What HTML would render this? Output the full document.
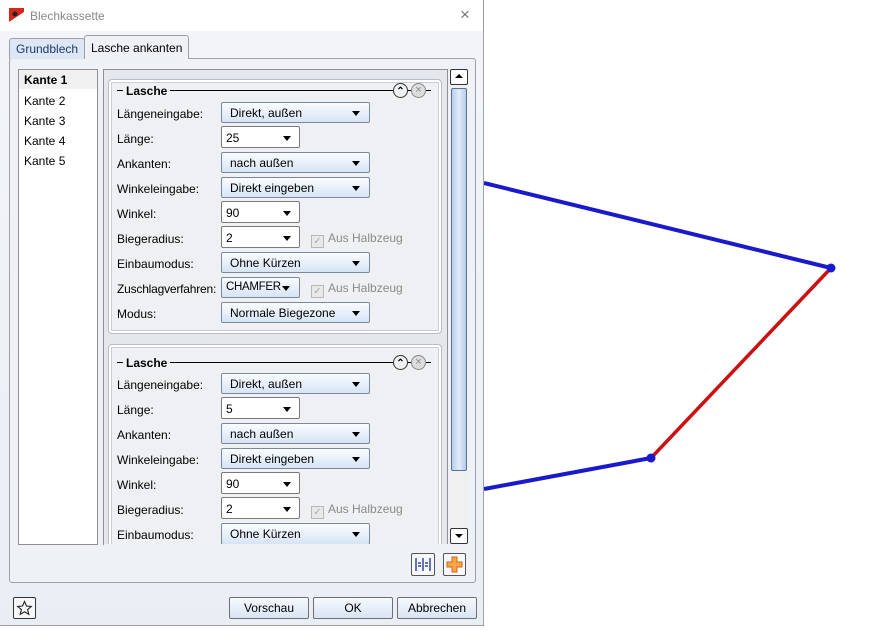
<!DOCTYPE html>
<html><head><meta charset="utf-8"><style>
*{box-sizing:border-box;margin:0;padding:0}
body{width:888px;height:630px;background:#fff;position:relative;overflow:hidden;font-family:"Liberation Sans",sans-serif;font-size:12px;color:#000}
.a{position:absolute}
#dlg{left:0;top:0;width:484px;height:626px;background:linear-gradient(#f3f5f8,#e9eef5);border-right:1px solid #a0a0a0;border-bottom:1px solid #a0a0a0}
#title{left:0;top:0;width:483px;height:31px;background:#fff}
.tab{border:1px solid #a0a0a0;border-bottom:none;border-radius:3px 3px 0 0;padding:3px 6px;font-size:12px}
.lbl{left:117px;font-size:12px}
.cb{height:21px;border:1px solid #7a8a9c;border-radius:2px;background:linear-gradient(#fafcff,#d6e4f5);padding:3px 0 0 8px;font-size:12px}
.cb:after{content:"";position:absolute;right:9px;top:8px;border:4px solid transparent;border-top:5px solid #000;border-bottom:0}
.ed{height:22px;border:1px solid #7a7a7a;border-radius:2px;background:#fff;padding:4px 0 0 4px}
.ed:after{content:"";position:absolute;right:8px;top:9px;border:4px solid transparent;border-top:5px solid #000;border-bottom:0}
.chk{font-size:12px;color:#8a8a8a;white-space:nowrap}
.chk i{display:inline-block;width:13px;height:13px;border:1px solid #b8b8b8;background:#e8e8e8;vertical-align:-2px;margin-right:4px;font-style:normal;font-size:10px;line-height:11px;text-align:center;color:#aaa}
.grp{border:1px solid #b8bcc4;border-radius:4px;background:#eef0f3;box-shadow:inset 0 0 0 2px #fff,inset 0 0 0 3px #ccd}
.btn{height:22px;border:1px solid #707070;border-radius:2px;background:linear-gradient(#f6f9fd,#d9e5f3);text-align:center;padding-top:3px}
.hd{font-weight:bold;background:#eef0f3;padding:0 3px;font-size:12px}
</style></head><body>
<svg class="a" style="left:0;top:0" width="888" height="630">
<line x1="484" y1="183" x2="831" y2="268" stroke="#1a1acc" stroke-width="4"/>
<line x1="831" y1="268" x2="651" y2="458" stroke="#cc1111" stroke-width="3.5"/>
<line x1="651" y1="458" x2="484" y2="489" stroke="#1a1acc" stroke-width="4"/>
<circle cx="831" cy="268" r="4.5" fill="#1a1acc"/><circle cx="651" cy="458" r="4.5" fill="#1a1acc"/>
</svg>
<div id="dlg" class="a"></div>
<div id="title" class="a"></div>
<svg class="a" style="left:9px;top:8px" width="15" height="14"><rect width="15" height="14" fill="#d7261e"/><polygon points="0,14 15,4 15,14" fill="#fff"/><circle cx="6" cy="6" r="2.5" fill="#222"/></svg>
<div class="a" style="left:30px;top:9px;font-size:12px;color:#888">Blechkassette</div>
<div class="a" style="left:460px;top:5px;font-size:17px;color:#777">×</div>
<div class="a" style="left:9px;top:58px;width:467px;height:525px;border:1px solid #a0a0a0;border-radius:3px;background:#eef1f5"></div>
<div class="a tab" style="left:9px;top:38px;height:21px;background:#dde6f4;color:#1a3a6a">Grundblech</div>
<div class="a tab" style="left:84px;top:35px;height:24px;background:#eef1f5;padding-top:5px">Lasche ankanten</div>
<div class="a" style="left:18px;top:69px;width:80px;height:476px;border:1px solid #909090;background:#fff"></div>
<div class="a" style="left:19px;top:70px;width:78px;height:19px;background:#f0f0f0"></div>
<div class="a" style="left:24px;top:73px;font-weight:bold">Kante 1</div>
<div class="a" style="left:24px;top:94px">Kante 2</div>
<div class="a" style="left:24px;top:114px">Kante 3</div>
<div class="a" style="left:24px;top:134px">Kante 4</div>
<div class="a" style="left:24px;top:154px">Kante 5</div>
<div class="a" style="left:103px;top:69px;width:345px;height:476px;border:1px solid #909090;border-bottom:none;background:#e4e7ec;overflow:hidden">
 <div class="a grp" style="left:4px;top:9px;width:334px;height:255px"></div>
 <div class="a grp" style="left:4px;top:274px;width:334px;height:260px"></div>
</div>
<div class="a" style="left:450px;top:69px;width:18px;height:476px;background:#f0f0f0"></div>
<div class="a" style="left:450px;top:69px;width:18px;height:16px;border:1px solid #333;border-radius:2px;background:#fff"></div>
<div class="a" style="left:455px;top:74px;border:4px solid transparent;border-bottom:4px solid #000;border-top:0"></div>
<div class="a" style="left:451px;top:88px;width:16px;height:383px;border:1px solid #5d7090;border-radius:2px;background:linear-gradient(90deg,#b5cdea,#e2ecfa,#b5cdea)"></div>
<div class="a" style="left:450px;top:528px;width:18px;height:16px;border:1px solid #333;border-radius:2px;background:#fff"></div>
<div class="a" style="left:455px;top:534px;border:4px solid transparent;border-top:4px solid #000;border-bottom:0"></div>

<!-- group 1 -->
<div class="a" style="left:117px;top:90px;width:276px;border-top:1px solid #000"></div>
<div class="a hd" style="left:123px;top:84px">Lasche</div>
<div class="a" style="left:393px;top:83px;width:15px;height:15px;border:1px solid #333;border-radius:50%;font-size:10px;text-align:center;line-height:15px;font-weight:bold;background:#eef0f3">⌃</div>
<div class="a" style="left:411px;top:83px;width:15px;height:15px;border:1px solid #888;border-radius:50%;font-size:11px;text-align:center;line-height:13px;color:#888;background:#ddd">×</div>
<div class="a" style="left:408px;top:90px;width:3px;border-top:1px solid #000"></div>
<div class="a" style="left:426px;top:90px;width:5px;border-top:1px solid #000"></div>

<div class="a lbl" style="top:107px">Längeneingabe:</div><div class="a cb" style="left:221px;top:102px;width:149px">Direkt, außen</div>
<div class="a lbl" style="top:132px">Länge:</div><div class="a ed" style="left:221px;top:126px;width:79px">25</div>
<div class="a lbl" style="top:157px">Ankanten:</div><div class="a cb" style="left:221px;top:152px;width:149px">nach außen</div>
<div class="a lbl" style="top:182px">Winkeleingabe:</div><div class="a cb" style="left:221px;top:177px;width:149px">Direkt eingeben</div>
<div class="a lbl" style="top:207px">Winkel:</div><div class="a ed" style="left:221px;top:201px;width:79px">90</div>
<div class="a lbl" style="top:232px">Biegeradius:</div><div class="a ed" style="left:221px;top:226px;width:79px">2</div>
<div class="a chk" style="left:311px;top:231px"><i>✓</i>Aus Halbzeug</div>
<div class="a lbl" style="top:257px">Einbaumodus:</div><div class="a cb" style="left:221px;top:252px;width:149px">Ohne Kürzen</div>
<div class="a lbl" style="top:282px;letter-spacing:-0.2px">Zuschlagverfahren:</div><div class="a cb" style="left:221px;top:277px;width:79px;padding-left:4px;font-size:11.5px;letter-spacing:-0.3px">CHAMFER</div>
<div class="a chk" style="left:311px;top:281px"><i>✓</i>Aus Halbzeug</div>
<div class="a lbl" style="top:307px">Modus:</div><div class="a cb" style="left:221px;top:302px;width:149px">Normale Biegezone</div>

<!-- group 2 -->
<div class="a" style="left:117px;top:362px;width:276px;border-top:1px solid #000"></div>
<div class="a hd" style="left:123px;top:356px">Lasche</div>
<div class="a" style="left:393px;top:355px;width:15px;height:15px;border:1px solid #333;border-radius:50%;font-size:10px;text-align:center;line-height:15px;font-weight:bold;background:#eef0f3">⌃</div>
<div class="a" style="left:411px;top:355px;width:15px;height:15px;border:1px solid #888;border-radius:50%;font-size:11px;text-align:center;line-height:13px;color:#888;background:#ddd">×</div>
<div class="a" style="left:408px;top:362px;width:3px;border-top:1px solid #000"></div>
<div class="a" style="left:426px;top:362px;width:5px;border-top:1px solid #000"></div>

<div class="a lbl" style="top:378px">Längeneingabe:</div><div class="a cb" style="left:221px;top:373px;width:149px">Direkt, außen</div>
<div class="a lbl" style="top:403px">Länge:</div><div class="a ed" style="left:221px;top:397px;width:79px">5</div>
<div class="a lbl" style="top:428px">Ankanten:</div><div class="a cb" style="left:221px;top:423px;width:149px">nach außen</div>
<div class="a lbl" style="top:453px">Winkeleingabe:</div><div class="a cb" style="left:221px;top:448px;width:149px">Direkt eingeben</div>
<div class="a lbl" style="top:478px">Winkel:</div><div class="a ed" style="left:221px;top:472px;width:79px">90</div>
<div class="a lbl" style="top:503px">Biegeradius:</div><div class="a ed" style="left:221px;top:497px;width:79px">2</div>
<div class="a chk" style="left:311px;top:502px"><i>✓</i>Aus Halbzeug</div>
<div class="a lbl" style="top:528px">Einbaumodus:</div><div class="a cb" style="left:221px;top:523px;width:149px;height:22px">Ohne Kürzen</div>
<div class="a" style="left:104px;top:544px;width:344px;height:2px;background:#eef1f5"></div>

<!-- bottom icons -->
<div class="a" style="left:411px;top:553px;width:24px;height:23px;border:1px solid #555;border-radius:2px;background:#f6f8fb"></div>
<svg class="a" style="left:414px;top:557px" width="18" height="15"><g stroke="#1a2a9a" stroke-width="1.3" fill="none"><line x1="2" y1="1" x2="2" y2="14"/><line x1="9" y1="1" x2="9" y2="14"/><line x1="16" y1="1" x2="16" y2="14"/><line x1="4" y1="6" x2="7" y2="6"/><line x1="4" y1="9" x2="7" y2="9"/><line x1="11" y1="6" x2="14" y2="6"/><line x1="11" y1="9" x2="14" y2="9"/></g></svg>
<div class="a" style="left:443px;top:553px;width:23px;height:23px;border:1px solid #555;border-radius:2px;background:#f6f8fb"></div>
<svg class="a" style="left:446px;top:556px" width="17" height="17"><path d="M6 1h5v5h5v5h-5v5h-5v-5h-5v-5h5z" fill="#f7a34a" stroke="#d06a10" stroke-width="1"/></svg>

<div class="a" style="left:13px;top:597px;width:23px;height:22px;border:1px solid #333;border-radius:2px;background:#f6f8fb"></div>
<svg class="a" style="left:16px;top:600px" width="17" height="16"><path d="M8.5 1.5l2 4.5 4.8.4-3.7 3.2 1.2 4.8-4.3-2.6-4.3 2.6 1.2-4.8-3.7-3.2 4.8-.4z" fill="none" stroke="#222" stroke-width="1.1"/></svg>
<div class="a btn" style="left:229px;top:597px;width:80px">Vorschau</div>
<div class="a btn" style="left:313px;top:597px;width:80px">OK</div>
<div class="a btn" style="left:397px;top:597px;width:80px">Abbrechen</div>
</body></html>
